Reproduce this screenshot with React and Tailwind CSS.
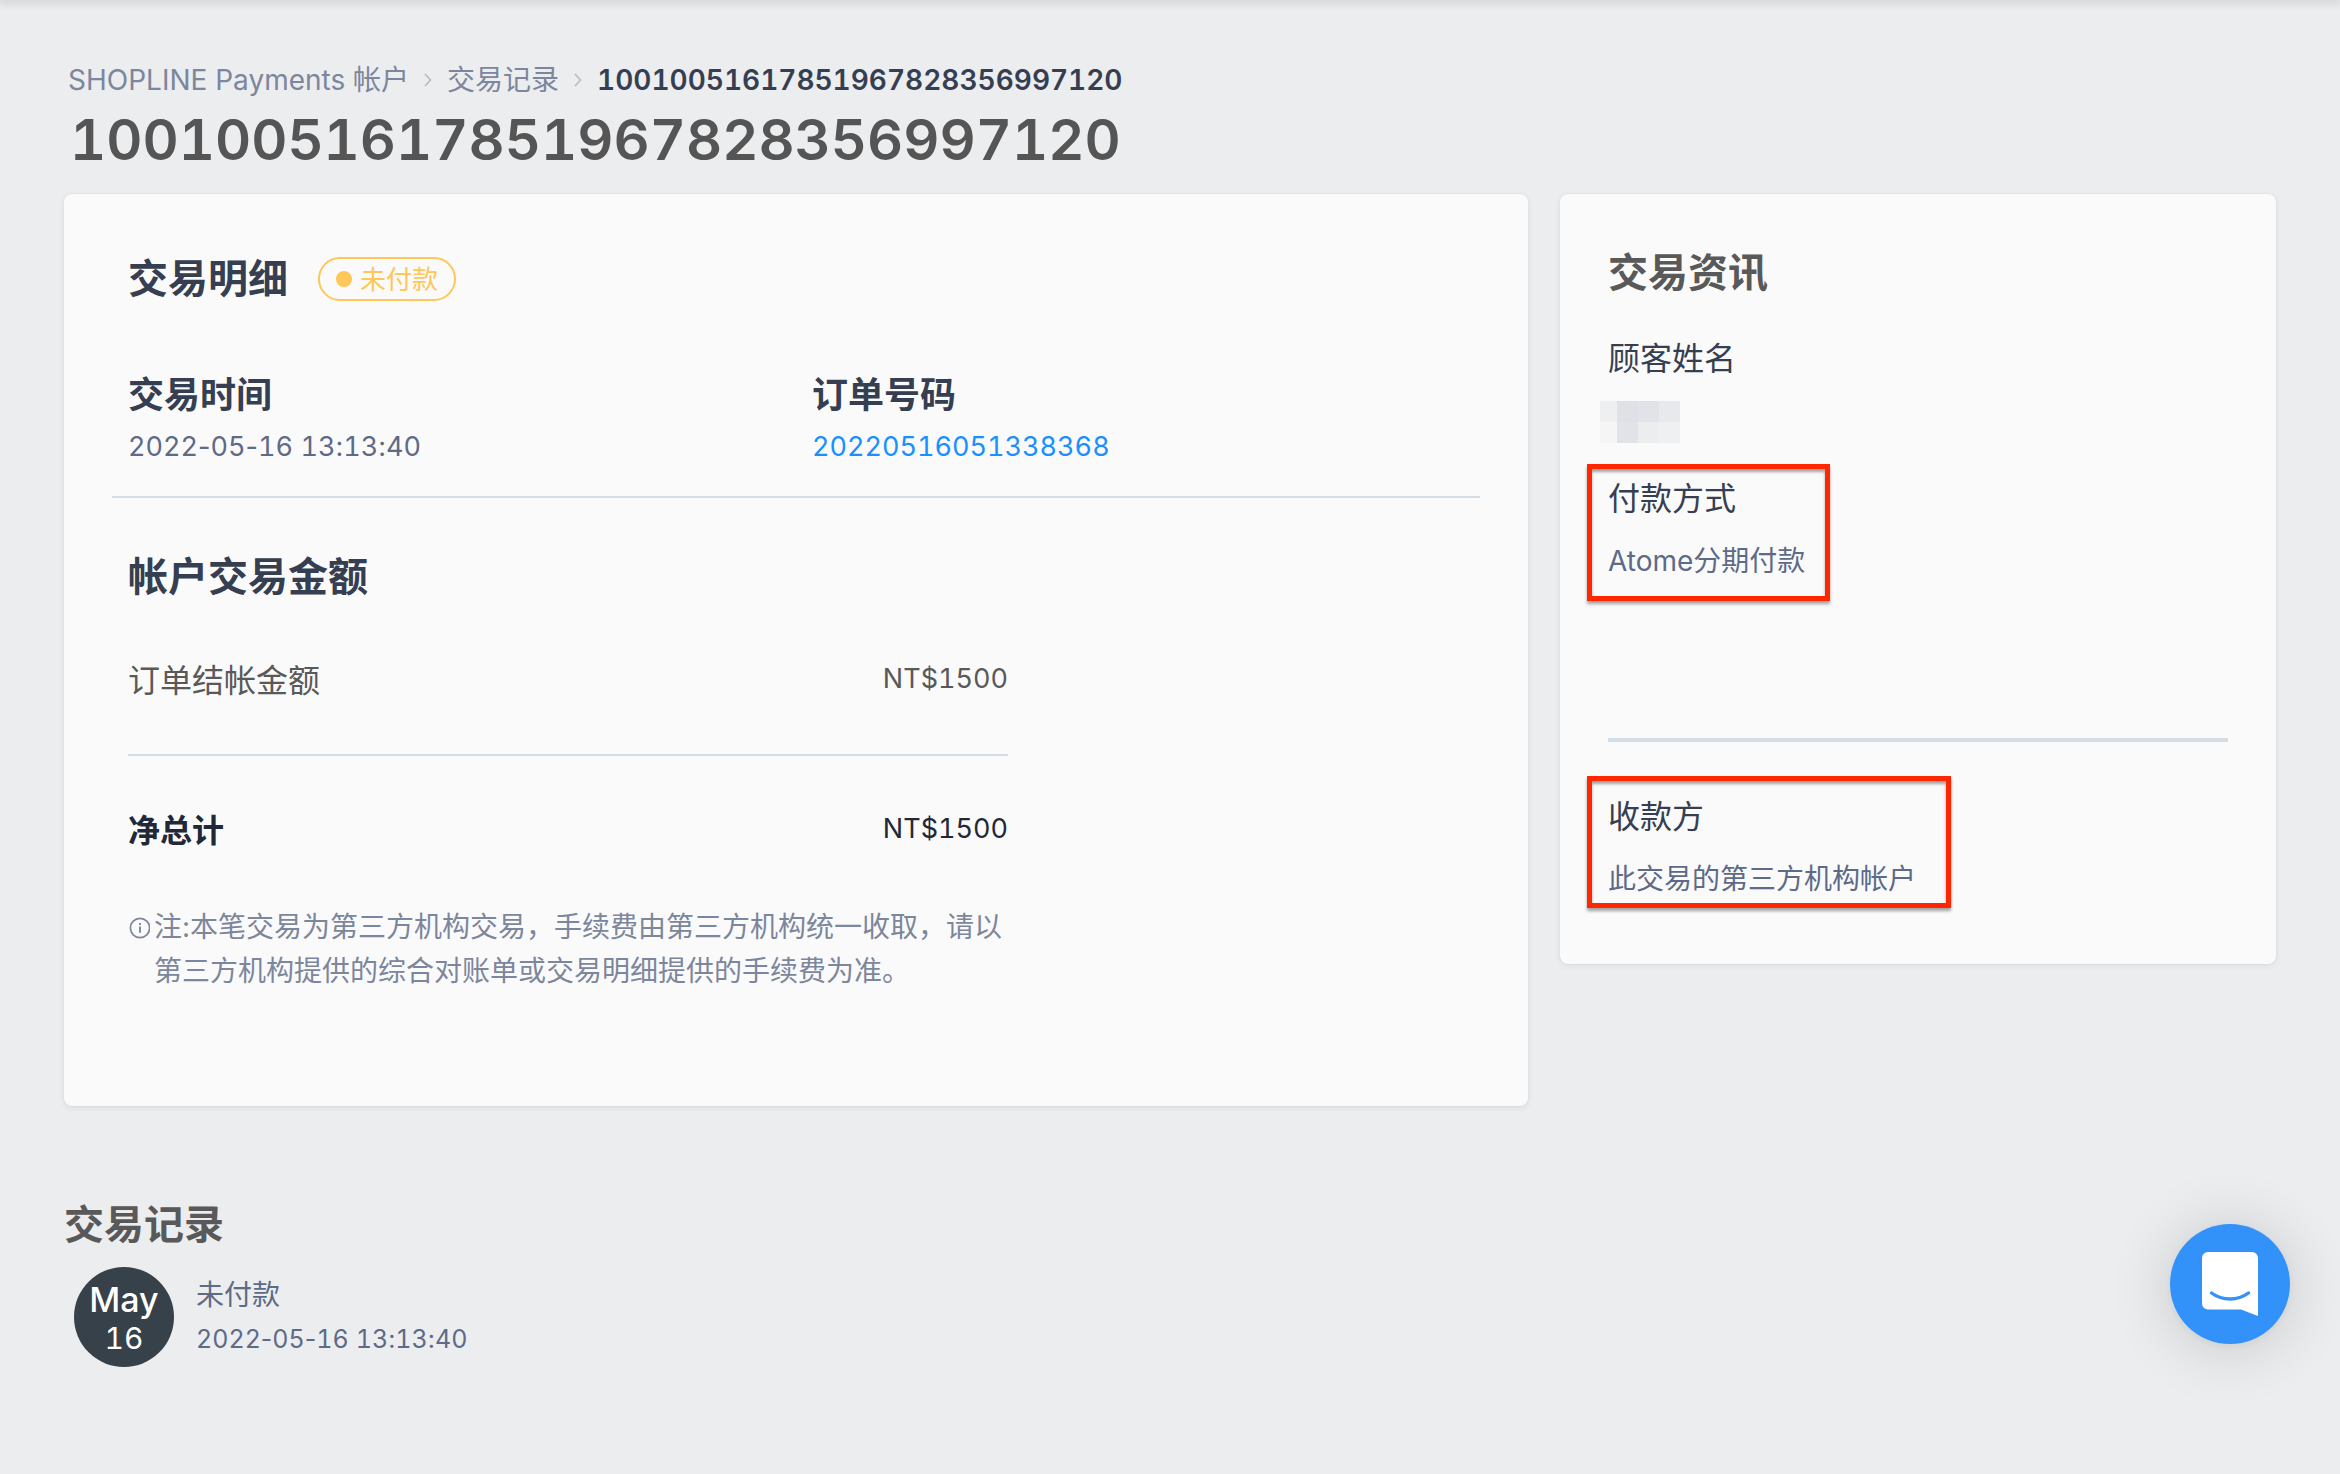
import React from "react";

const TRANSACTION_ID = "10010051617851967828356997120";
const TRANSACTION_TIME = "2022-05-16 13:13:40";

// Blocks covering the customer's name, row by row
const MASK_ROWS = [
  ["bg-[#eeeff1]", "bg-[#e0e1e7]", "bg-[#e2e3e8]", "bg-[#e8e9ed]"],
  ["bg-[#f5f5f6]", "bg-[#e2e3e8]", "bg-[#ecedef]", "bg-[#eff0f2]"],
];

const ChevronIcon = () => (
  <svg width="8" height="14" viewBox="0 0 8 14" fill="none" className="mx-[15px] shrink-0" aria-hidden="true">
    <path d="M1 1l5.5 6L1 13" stroke="#b4bccb" strokeWidth="1.6" />
  </svg>
);

const InfoIcon = () => (
  <svg width="22" height="22" viewBox="0 0 22 22" fill="none" className="mt-3 shrink-0" aria-hidden="true">
    <circle cx="12" cy="11" r="9.6" stroke="#7c869c" strokeWidth="1.7" />
    <path d="M12 9.6v6.2M12 6v2" stroke="#7c869c" strokeWidth="1.9" />
  </svg>
);

const ChatIcon = () => (
  <svg width="56" height="64" viewBox="0 0 56 64" fill="none" aria-hidden="true">
    <path d="M6 0h44a6 6 0 0 1 6 6v58l-17-6.6H6a6 6 0 0 1-6-6V6a6 6 0 0 1 6-6z" fill="#fff" />
    <path d="M9.5 41c11 8 26 8 37 0" stroke="#3292fa" strokeWidth="3.4" strokeLinecap="round" />
  </svg>
);

// Tabular digits, but the separators keep their normal width
const Timestamp = ({ value }) => (
  <time dateTime={value}>
    {value.split(/(\d+)/).map((part, i) => (
      <span key={i} className={/\d/.test(part) ? "tabular-nums" : ""}>
        {part}
      </span>
    ))}
  </time>
);

const Card = ({ children, className = "" }) => (
  <section className={`rounded-lg bg-[#fafafa] shadow-[0_0_2px_rgba(63,63,68,0.10),0_2px_6px_rgba(63,63,68,0.08)] ${className}`}>
    {children}
  </section>
);

const Highlight = ({ children, className = "" }) => (
  <div
    className={`-ml-[21px] w-fit border-5 border-[#ff2600] pl-4 shadow-[0_3px_3px_rgba(0,0,0,0.35),inset_0_3px_3px_rgba(0,0,0,0.35)] ${className}`}
  >
    {children}
  </div>
);

const InfoItem = ({ label, value }) => (
  <dl>
    <dt className="text-[32px] leading-[60px] text-[#363f51]">{label}</dt>
    <dd className="mt-2 text-[28px] leading-[48px] text-[#5d6a88]">{value}</dd>
  </dl>
);

const Breadcrumb = () => (
  <nav aria-label="breadcrumb">
    <ol className="flex items-center pl-1 text-[28px] leading-[40px] text-[#7c869c]">
      <li>
        <a href="#account">SHOPLINE Payments 帐户</a>
      </li>
      <ChevronIcon />
      <li>
        <a href="#records">交易记录</a>
      </li>
      <ChevronIcon />
      <li className="font-semibold text-[#363f51] tabular-nums" aria-current="page">
        {TRANSACTION_ID}
      </li>
    </ol>
  </nav>
);

const TransactionDetail = () => (
  <Card className="col-span-2 h-[912px] px-12 pt-[59px]">
    <div className="flex items-center px-4">
      <h2 className="text-[40px] leading-[52px] font-semibold text-[#363f51]">交易明细</h2>
      <span className="ml-[30px] flex h-11 items-center gap-2 rounded-full border-2 border-[#ffc658] px-4 text-[26px] text-[#ffc658]">
        <span className="size-4 rounded-full bg-[#ffc658]" />
        未付款
      </span>
    </div>

    <div className="mt-16 grid grid-cols-2 border-b-2 border-[#d2dde6] pb-[27px]">
      <div className="px-4">
        <h3 className="text-[36px] leading-[52px] font-semibold text-[#363f51]">交易时间</h3>
        <p className="mt-1 text-[27px] leading-[44px] text-[#5d6a88]">
          <Timestamp value={TRANSACTION_TIME} />
        </p>
      </div>
      <div className="px-4">
        <h3 className="text-[36px] leading-[52px] font-semibold text-[#363f51]">订单号码</h3>
        <a href="#order" className="mt-1 block w-fit text-[27px] leading-[44px] text-[#1890ff] tabular-nums">
          20220516051338368
        </a>
      </div>
    </div>

    <div className="mt-[53px] max-w-[912px] px-4">
      <h2 className="text-[40px] leading-[52px] font-semibold text-[#363f51]">帐户交易金额</h2>
      <dl>
        <div className="mt-[54px] flex justify-between border-b-2 border-[#d2dde6] pb-[49px] text-[#595959]">
          <dt className="text-[32px] leading-[48px]">订单结帐金额</dt>
          <dd className="text-[27px] leading-[44px] tabular-nums">NT$1500</dd>
        </div>
        <div className="mt-[51px] flex justify-between text-[#212939]">
          <dt className="text-[32px] leading-[48px] font-semibold">净总计</dt>
          <dd className="text-[27px] leading-[44px] tabular-nums">NT$1500</dd>
        </div>
      </dl>
      <div className="mt-[50px] flex gap-1 text-[28px] leading-[44px] text-[#7c869c]">
        <InfoIcon />
        <p>注:本笔交易为第三方机构交易，手续费由第三方机构统一收取，请以第三方机构提供的综合对账单或交易明细提供的手续费为准。</p>
      </div>
    </div>
  </Card>
);

const TransactionInfo = () => (
  <Card className="h-[770px] px-12 pt-[53px]">
    <h2 className="text-[40px] leading-[52px] font-semibold text-[#595959]">交易资讯</h2>
    <h3 className="mt-[30px] text-[32px] leading-[60px] text-[#363f51]">顾客姓名</h3>
    <div className="mt-3 -ml-2 w-20" aria-label="hidden name">
      {MASK_ROWS.map((row, i) => (
        <div key={i} className="grid h-[21px] grid-cols-[17px_21px_21px_21px]">
          {row.map((color, j) => (
            <span key={j} className={color} />
          ))}
        </div>
      ))}
    </div>
    <Highlight className="mt-[21px] pr-5 pb-[11px]">
      <InfoItem label="付款方式" value="Atome分期付款" />
    </Highlight>
    <hr className="mt-[137px] border-t-4 border-[#d2dde6]" />
    <Highlight className="mt-[34px] pt-[6px] pr-[30px]">
      <InfoItem label="收款方" value="此交易的第三方机构帐户" />
    </Highlight>
  </Card>
);

const TransactionHistory = () => (
  <section className="mt-[93px]">
    <h2 className="text-[40px] leading-[52px] font-semibold text-[#595959]">交易记录</h2>
    <div className="mt-4 flex items-center pl-[10px]">
      <div className="flex size-25 flex-col items-center justify-center rounded-full bg-[#36414a] pt-1 text-white">
        <span className="text-[34px] leading-[38px] font-medium">May</span>
        <span className="text-[30px] leading-[38px] tabular-nums">16</span>
      </div>
      <div className="ml-[22px] text-[#5d6a88]">
        <p className="text-[28px] leading-[44px]">未付款</p>
        <p className="text-[25px] leading-[44px]">
          <Timestamp value={TRANSACTION_TIME} />
        </p>
      </div>
    </div>
  </section>
);

const App = () => (
  <div className="min-h-screen overflow-hidden bg-[#ecedef] font-[Inter,'Noto_Sans_CJK_SC',sans-serif]" lang="zh-CN">
    <header className="h-0 shadow-[0_0_10px_2px_rgba(0,0,0,0.22)]" />
    <main className="px-16 pt-[60px]">
      <Breadcrumb />
      <h1 className="mt-1 pl-[6px] text-[56px] leading-[72px] font-semibold text-[#555555] tabular-nums">{TRANSACTION_ID}</h1>
      <div className="mt-[18px] grid grid-cols-3 items-start gap-8">
        <TransactionDetail />
        <TransactionInfo />
      </div>
      <TransactionHistory />
    </main>
    <button
      type="button"
      aria-label="Open chat"
      className="fixed right-[50px] bottom-[130px] flex size-30 items-center justify-center rounded-full bg-[#3292fa] shadow-[0_2px_12px_rgba(0,0,0,0.06),0_4px_64px_rgba(0,0,0,0.16)]"
    >
      <ChatIcon />
    </button>
  </div>
);

export default App;
